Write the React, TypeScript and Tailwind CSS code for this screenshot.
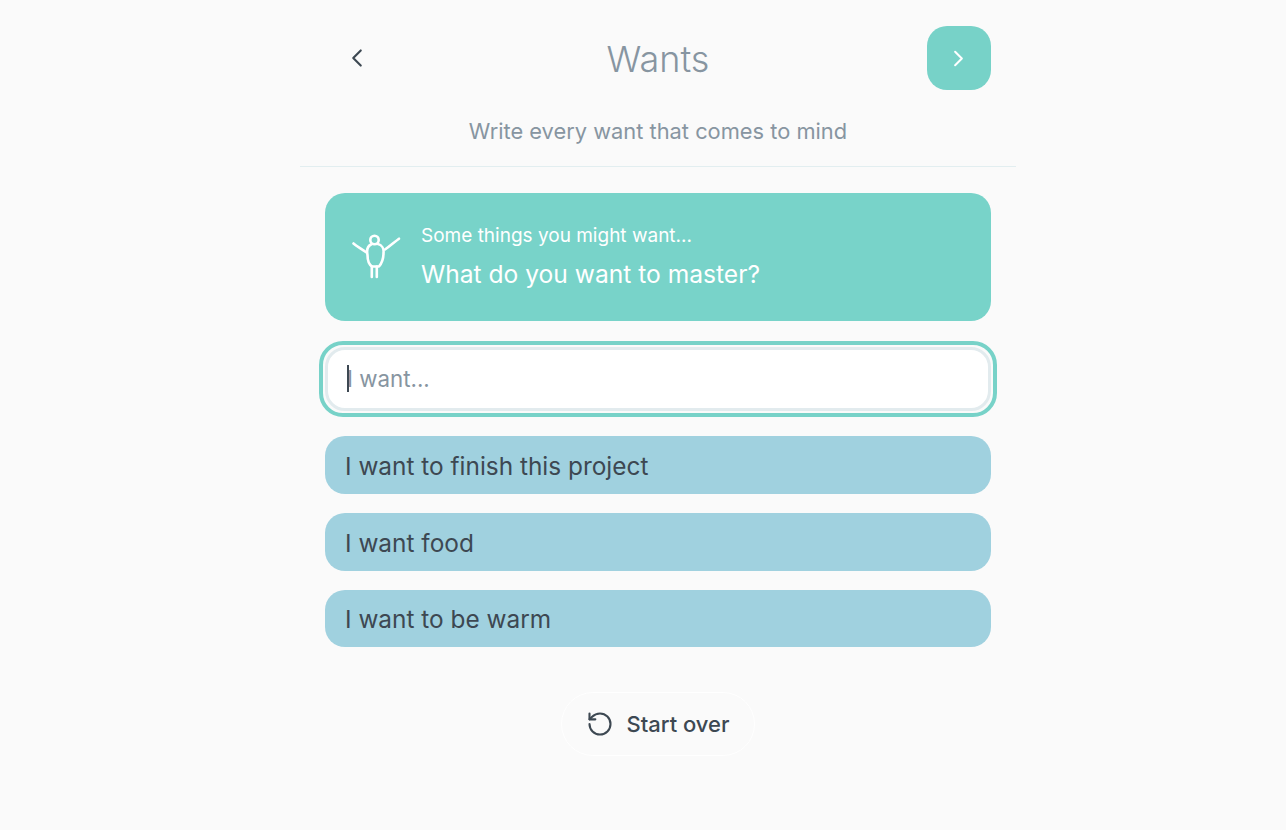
import { ChevronLeft, ChevronRight, RotateCcw } from 'lucide-react';

const WANTS = ['I want to finish this project', 'I want food', 'I want to be warm'];

function Figure() {
  return (
    <svg width="50" height="50" viewBox="0 0 50 50" fill="none" stroke="white" strokeWidth="2.6" strokeLinecap="round" strokeLinejoin="round" className="shrink-0">
      <circle cx="22.5" cy="8" r="4.2" />
      <path d="M1.5 11.5C5 14.5 10 17 13.8 20" />
      <path d="M47 6.7C43 9.5 38 14 33 17.5" />
      <path d="M19 12.5C16 14 14.5 18 15.5 23C15.5 28 17 32.5 20 34.5L27 34.5C30 31 31.5 26 31.5 21C32 17 30 13 26 12" />
      <path d="M19.8 34.5L19.8 45" />
      <path d="M24.8 34.5L24.8 45" />
    </svg>
  );
}

export default function App() {
  return (
    <div className="min-h-[830px] bg-[#fafafa] font-['Inter',sans-serif]">
      <div className="ml-[300px] w-[716px]">
        <header className="border-b border-[#e2eef0] pb-[21px] pt-[26px]">
          <div className="flex items-center justify-between px-[25px]">
            <button type="button" className="flex h-16 w-16 items-center justify-center text-[#3d4852]">
              <ChevronLeft size={30} strokeWidth={1.7} />
            </button>
            <h1 className="translate-y-px text-[36px] font-light leading-[64px] text-[#8795a1]">Wants</h1>
            <button type="button" className="flex h-16 w-16 items-center justify-center rounded-[20px] bg-[#77d2c8] text-white">
              <ChevronRight size={27} strokeWidth={1.8} />
            </button>
          </div>
          <p className="mt-[27px] text-center text-[21.85px] leading-[28px] text-[#8795a1]">Write every want that comes to mind</p>
        </header>

        <main className="px-[25px] pt-[26px]">
          <section className="flex h-[128px] items-center gap-[19px] rounded-[20px] bg-[#78d3c9] pl-[27px] text-white">
            <Figure />
            <div className="flex flex-col gap-[10px]">
              <p className="text-[19px] leading-[24px]">Some things you might want...</p>
              <p className="text-[24.6px] leading-[32px]">What do you want to master?</p>
            </div>
          </section>

          <div className="-mx-[6px] mt-[20px] h-[76px] rounded-[24px] border-4 border-[#77d2c8] p-[2px]">
            <div className="relative flex h-full items-center rounded-[20px] border-[3px] border-[#e2ebee] bg-white pl-[19px]">
              <span className="absolute left-[19px] top-[15px] h-[27px] w-[2px] bg-[#3d4852]" />
              <input
                readOnly
                placeholder="I want..."
                className="w-full bg-transparent text-[22.3px] text-[#3d4852] outline-none placeholder:text-[#8795a1]"
              />
            </div>
          </div>

          <ul className="mt-[19px] flex flex-col gap-[19px]">
            {WANTS.map((want) => (
              <li key={want} className="flex h-[58px] items-center rounded-[20px] bg-[#a0d1df] pl-5 pt-[3px] text-[24.4px] text-[#3d4852] last:h-[57px] last:pt-[2px]">
                {want}
              </li>
            ))}
          </ul>

          <div className="mt-[45px] flex justify-center">
            <button type="button" className="flex h-16 w-[194px] items-center justify-center gap-[12px] rounded-full border border-white text-[#3d4852]">
              <RotateCcw size={28} strokeWidth={1.8} />
              <span className="text-[22px] font-medium">Start over</span>
            </button>
          </div>
        </main>
      </div>
    </div>
  );
}
